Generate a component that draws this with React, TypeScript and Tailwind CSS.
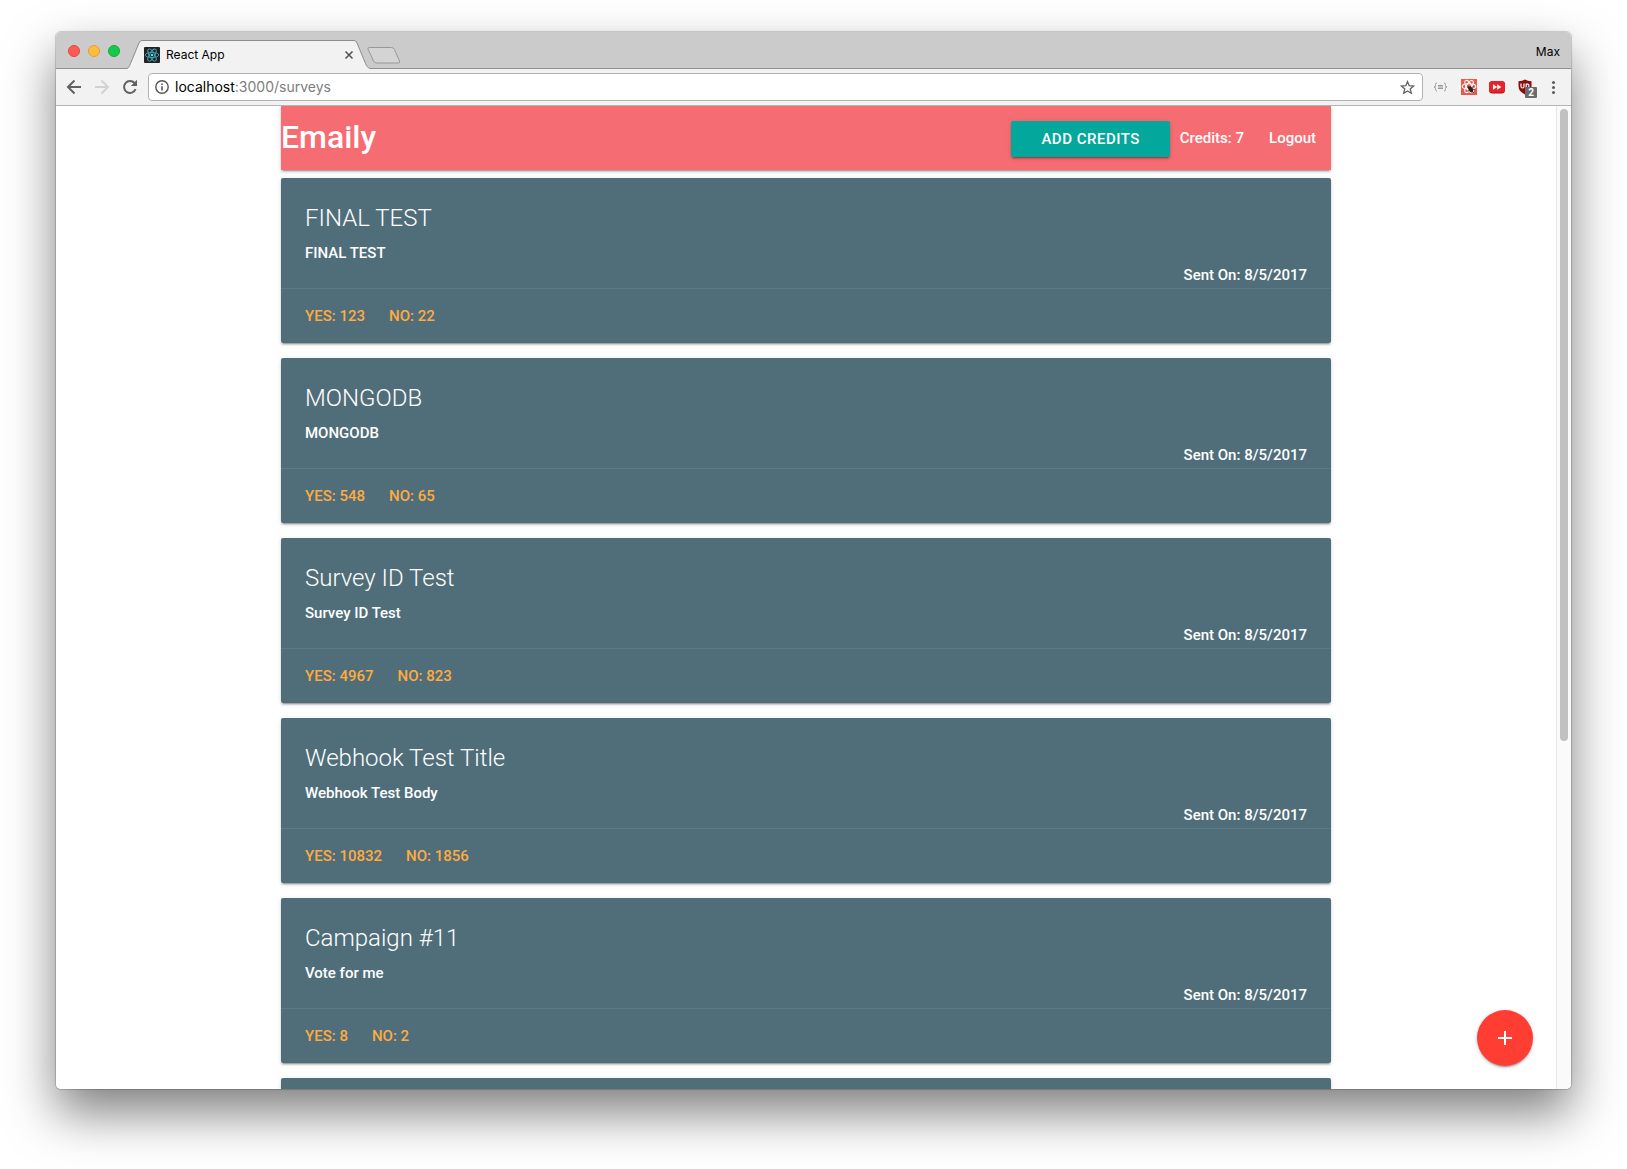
import React from "react";

type Survey = { title: string; body: string; sent: string; yes: number; no: number };

const surveys: Survey[] = [
  { title: "FINAL TEST", body: "FINAL TEST", sent: "8/5/2017", yes: 123, no: 22 },
  { title: "MONGODB", body: "MONGODB", sent: "8/5/2017", yes: 548, no: 65 },
  { title: "Survey ID Test", body: "Survey ID Test", sent: "8/5/2017", yes: 4967, no: 823 },
  { title: "Webhook Test Title", body: "Webhook Test Body", sent: "8/5/2017", yes: 10832, no: 1856 },
  { title: "Campaign #11", body: "Vote for me", sent: "8/5/2017", yes: 8, no: 2 },
  { title: "", body: "", sent: "", yes: 0, no: 0 },
];

const materialShadow =
  "shadow-[0_2px_2px_0_rgba(0,0,0,0.14),0_1px_5px_0_rgba(0,0,0,0.12),0_3px_1px_-2px_rgba(0,0,0,0.2)]";

function ReactFavicon() {
  return (
    <svg className="size-4 shrink-0" viewBox="0 0 16 16" aria-hidden="true">
      <rect width="16" height="16" rx="1" fill="#222" />
      <g fill="none" stroke="#3fa6bd" strokeWidth="0.9">
        <ellipse cx="8" cy="8" rx="6.8" ry="2.6" />
        <ellipse cx="8" cy="8" rx="6.8" ry="2.6" transform="rotate(60 8 8)" />
        <ellipse cx="8" cy="8" rx="6.8" ry="2.6" transform="rotate(120 8 8)" />
      </g>
      <circle cx="8" cy="8" r="1.3" fill="#61dafb" />
    </svg>
  );
}

function TabStrip() {
  return (
    <div className="flex h-9 shrink-0 items-end bg-[#cbcbcb] font-['Inter',sans-serif]">
      <div className="flex h-9 w-[71px] items-center gap-2 pl-3 pt-0.5">
        <button aria-label="Close window" className="size-3 shrink-0 rounded-full border border-[#e2453f] bg-[#ff5b56]" />
        <button aria-label="Minimize window" className="size-3 shrink-0 rounded-full border border-[#e0a033] bg-[#ffbd3d]" />
        <button aria-label="Zoom window" className="size-3 shrink-0 rounded-full border border-[#12ab3c] bg-[#14c94c]" />
      </div>
      <div className="relative -mb-px flex h-[29px] w-[244px] items-center pl-[17px] pr-[17px]">
        <svg className="absolute inset-0 h-full w-full" viewBox="0 0 244 29" aria-hidden="true">
          <path
            d="M0 28.500C1.500 28 2.500 26 3.500 23.500L12 3Q13 0.500 15 0.500H227Q229 0.500 230 3L238.500 23.500C239.500 26 241 28 243 28.500V29H0Z"
            fill="#f2f2f2"
          />
          <path
            d="M0 28.500C1.500 28 2.500 26 3.500 23.500L12 3Q13 0.500 15 0.500H227Q229 0.500 230 3L238.500 23.500C239.500 26 241 28 243 28.500"
            fill="none"
            stroke="#8d8d8d"
          />
        </svg>
        <div className="relative flex flex-1 items-center">
          <ReactFavicon />
          <span className="ml-1.5 flex-1 text-[12px] leading-4">React App</span>
          <button aria-label="Close tab">
            <svg className="size-2.5" viewBox="0 0 10 10" aria-hidden="true">
              <path d="M1.500 1.500l7 7M8.500 1.500l-7 7" stroke="#555" strokeWidth="1.600" />
            </svg>
          </button>
        </div>
      </div>
      <button aria-label="New tab" className="-ml-1 mb-1">
        <svg className="h-[17px] w-[34px]" viewBox="0 0 34 17" aria-hidden="true">
          <path
            d="M2.500 0.500H24.500Q26.500 0.500 27.500 2.500L32.500 14Q33.300 16 31.500 16H9.500Q7.500 16 6.500 14L1 2Q0.500 0.500 2.500 0.500Z"
            fill="#d4d4d4"
            stroke="#979797"
          />
        </svg>
      </button>
      <span className="mb-2 ml-auto pr-[11px] text-[12px] leading-4">Max</span>
    </div>
  );
}

function Toolbar() {
  return (
    <div className="flex h-[38px] shrink-0 items-center border-y border-b-[#b4b4b4] border-t-[#8f8f8f] bg-[#f2f2f2] pl-2.5 pr-3">
      <button aria-label="Back">
        <svg className="size-4" viewBox="0 0 16 16" fill="none" stroke="#616161" strokeWidth="2" aria-hidden="true">
          <path d="M15 8H2.500M8.500 1.500L2 8l6.500 6.500" />
        </svg>
      </button>
      <button aria-label="Forward" className="ml-3">
        <svg className="size-4" viewBox="0 0 16 16" fill="none" stroke="#d2d2d2" strokeWidth="2" aria-hidden="true">
          <path d="M1 8H13.500M7.500 1.500L14 8l-6.500 6.500" />
        </svg>
      </button>
      <button aria-label="Reload" className="ml-3">
        <svg className="size-4" viewBox="0 0 16 16" aria-hidden="true">
          <path d="M13.600 10.200A6 6 0 1 1 12.600 4" fill="none" stroke="#616161" strokeWidth="2" />
          <path d="M15 0.800V7H8.800Z" fill="#616161" />
        </svg>
      </button>
      <div className="relative ml-2.5 flex h-7 flex-1 items-center rounded border border-[#b2b2b2] bg-white pl-1.5 pr-[7px]">
        <svg className="size-3.5 shrink-0" viewBox="0 0 14 14" aria-hidden="true">
          <circle cx="7" cy="7" r="6.200" fill="none" stroke="#555" strokeWidth="1.400" />
          <path d="M6.200 6.200h1.600v4.300H6.200zM6.200 3.400h1.600v1.600H6.200z" fill="#555" />
        </svg>
        <div className="relative ml-1.5 flex-1 font-['Inter',sans-serif] text-[14px] leading-5">
          <div aria-hidden="true" className="text-[#7d7d7d]">
            <span className="text-black">localhost</span>:3000/surveys
          </div>
          <input
            aria-label="Address"
            defaultValue="localhost:3000/surveys"
            className="absolute inset-0 w-full bg-transparent text-transparent outline-none"
          />
        </div>
        <button aria-label="Bookmark this page">
          <svg className="size-[15px]" viewBox="0 0 15 15" aria-hidden="true">
            <path
              d="M7.500 1.600L9.200 5.700 13.600 6 10.200 8.900 11.300 13.200 7.500 10.900 3.700 13.200 4.800 8.900 1.400 6 5.800 5.700Z"
              fill="none"
              stroke="#616161"
              strokeWidth="1.300"
            />
          </svg>
        </button>
      </div>
      <div className="ml-2.5 flex items-center gap-3">
        <button aria-label="JSON viewer">
          <svg className="h-4 w-[15px]" viewBox="0 0 15 16" fill="none" stroke="#989898" aria-hidden="true">
            <path d="M4 4Q2.500 4 2.500 5.500V6.700Q2.500 8 1 8Q2.500 8 2.500 9.300V10.500Q2.500 12 4 12M11 4Q12.500 4 12.500 5.500V6.700Q12.500 8 14 8Q12.500 8 12.500 9.300V10.500Q12.500 12 11 12M5 6.500H10M5 8H10M5 9.500H10" />
          </svg>
        </button>
        <button aria-label="React developer tools" className="ml-px">
          <svg className="size-4" viewBox="0 0 16 16" aria-hidden="true">
            <rect width="16" height="16" fill="#ea5a4b" />
            <g fill="none" stroke="#fff" strokeWidth="1.100">
              <ellipse cx="8" cy="7.500" rx="6.800" ry="2.700" />
              <ellipse cx="8" cy="7.500" rx="6.800" ry="2.700" transform="rotate(60 8 7.500)" />
              <ellipse cx="8" cy="7.500" rx="6.800" ry="2.700" transform="rotate(120 8 7.500)" />
            </g>
            <ellipse cx="9.700" cy="10.300" rx="2.100" ry="3.200" transform="rotate(-28 9.700 10.300)" fill="#2c2222" />
            <path d="M6.500 8.500L9 9.500M11 8.500L12.500 7.500M7 12L9 11.500M11 10L13.500 10.500M11 12L12.500 14M7 6.500L8.500 8.500" stroke="#2c2222" strokeWidth="0.800" />
          </svg>
        </button>
        <button aria-label="Video speed">
          <svg className="h-4 w-4" viewBox="0 0 16 16" aria-hidden="true">
            <rect y="2" width="16" height="12.500" rx="3.500" fill="#b30d14" />
            <rect y="2" width="16" height="11.500" rx="3.500" fill="#e8222b" />
            <path d="M4 5.200L8.200 8 4 10.800ZM8.200 5.200L12.400 8 8.200 10.800Z" fill="#fff" />
          </svg>
        </button>
        <button aria-label="Content blocker, 2 blocked" className="relative">
          <svg className="size-4" viewBox="0 0 16 16" aria-hidden="true">
            <path d="M8 0.500Q10.500 2.200 14.500 2.200V7Q14.500 12.500 8 15.500Q1.500 12.500 1.500 7V2.200Q5.500 2.200 8 0.500Z" fill="#8e0b0b" />
            <path d="M4 4.500V7.500Q4 9 5.500 9T7 7.500V4.500M9.200 11V5.200H10.500Q12 5.200 12 7T10.500 8.800H9.200" fill="none" stroke="#fff" strokeWidth="1.200" />
          </svg>
          <span className="absolute left-2 top-2 flex h-[11px] w-3 items-center justify-center rounded-[1px] bg-[#6b6b6b] text-[10px] font-bold leading-none text-white">
            2
          </span>
        </button>
        <button aria-label="Menu" className="ml-0.5 flex w-3 flex-col items-center gap-0.5">
          <span className="size-[3px] rounded-full bg-[#5c5c5c]" />
          <span className="size-[3px] rounded-full bg-[#5c5c5c]" />
          <span className="size-[3px] rounded-full bg-[#5c5c5c]" />
        </button>
      </div>
    </div>
  );
}

function SurveyCard({ survey }: { survey: Survey }) {
  return (
    <article className={`mb-[15px] min-h-[165px] shrink-0 rounded-xs bg-[#506e7a] font-[480] text-white ${materialShadow}`}>
      {survey.title && (
        <>
          <div className="h-[110px] px-6 pt-6">
            <h2 className="mb-2 text-[24px] font-[350] leading-8">{survey.title}</h2>
            <p>{survey.body}</p>
            <p className="text-right">Sent On: {survey.sent}</p>
          </div>
          <div className="flex gap-6 border-t border-[#5d7984] px-6 py-4 text-[#ffab40]">
            <a href="#yes">YES: {survey.yes}</a>
            <a href="#no">NO: {survey.no}</a>
          </div>
        </>
      )}
    </article>
  );
}

export default function App() {
  return (
    <div className="h-screen overflow-hidden bg-white px-14 pb-20 pt-8 font-['Roboto',sans-serif]">
      <div className="h-full rounded-[5px] shadow-[0_0_1px_1px_rgba(0,0,0,0.18),0_24px_50px_rgba(0,0,0,0.5)]">
        <div className="flex h-full flex-col overflow-hidden rounded-[5px] bg-white text-black">
          <TabStrip />
          <Toolbar />
          <div className="relative flex min-h-0 flex-1">
            <div className="min-w-0 flex-1 overflow-hidden">
              <div className="mx-auto flex w-[70%] flex-col text-[15px] leading-[22px]">
                <nav className={`mb-2 flex h-16 shrink-0 items-center bg-[#f66c73] font-[480] text-white ${materialShadow}`}>
                  <a href="#home" className="pb-0.5 text-[32px] leading-none">Emaily</a>
                  <button className={`ml-auto mt-0.5 h-9 rounded-xs bg-[#03a79b] px-[30px] tracking-[0.5px] ${materialShadow}`}>
                    ADD CREDITS
                  </button>
                  <span className="mx-2.5">Credits: 7</span>
                  <a href="#logout" className="px-[15px]">Logout</a>
                </nav>
                {surveys.map((s, i) => (
                  <SurveyCard key={i} survey={s} />
                ))}
              </div>
            </div>
            <div className="w-[15px] shrink-0 border-l border-[#e7e7e7] bg-[#fafafa] px-[3px] pt-[3px]">
              <div className="h-[64.5%] w-2 rounded-full bg-[#c1c1c1]" />
            </div>
            <a
              href="#new"
              aria-label="New survey"
              className={`absolute bottom-[23px] right-[38px] flex size-14 items-center justify-center rounded-full bg-[#ff3d33] ${materialShadow}`}
            >
              <svg className="size-6" viewBox="0 0 24 24" aria-hidden="true">
                <path d="M19 13h-6v6h-2v-6H5v-2h6V5h2v6h6z" fill="#fff" />
              </svg>
            </a>
          </div>
        </div>
      </div>
    </div>
  );
}
